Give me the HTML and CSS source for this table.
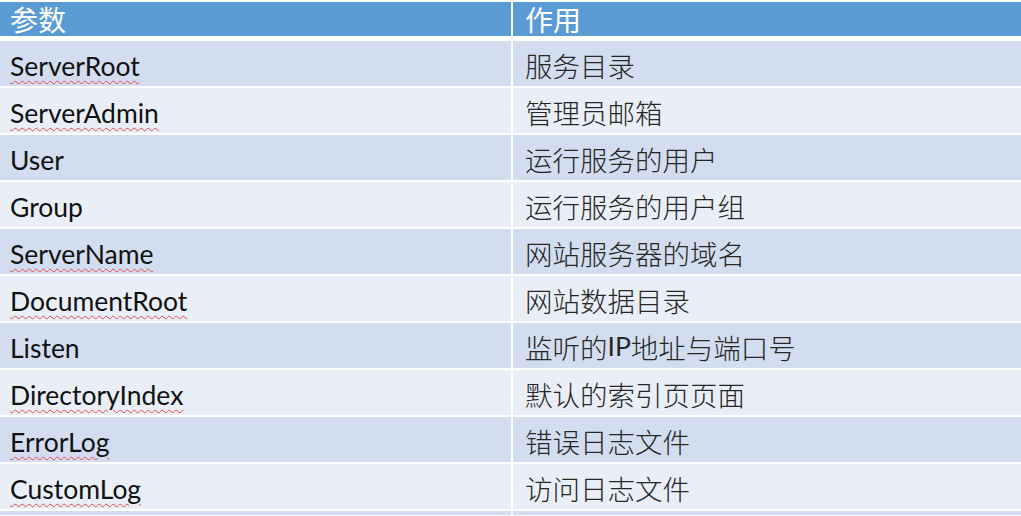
FILE: index.html
```html
<!DOCTYPE html>
<html lang="zh-CN">
<head>
<meta charset="utf-8">
<title>参数</title>
<link rel="stylesheet" href="styles.css">
</head>
<body>
<div class="table">
  <div class="cell head">参数</div>
  <div class="cell head right">作用</div>

  <div class="cell odd"><span class="typo">ServerRoot</span></div>
  <div class="cell odd right">服务目录</div>

  <div class="cell even"><span class="typo">ServerAdmin</span></div>
  <div class="cell even right">管理员邮箱</div>

  <div class="cell odd">User</div>
  <div class="cell odd right">运行服务的用户</div>

  <div class="cell even">Group</div>
  <div class="cell even right">运行服务的用户组</div>

  <div class="cell odd"><span class="typo">ServerName</span></div>
  <div class="cell odd right">网站服务器的域名</div>

  <div class="cell even"><span class="typo">DocumentRoot</span></div>
  <div class="cell even right">网站数据目录</div>

  <div class="cell odd">Listen</div>
  <div class="cell odd right">监听的<span class="latin">IP</span>地址与端口号</div>

  <div class="cell even"><span class="typo">DirectoryIndex</span></div>
  <div class="cell even right">默认的索引页页面</div>

  <div class="cell odd"><span class="typo">ErrorLog</span></div>
  <div class="cell odd right">错误日志文件</div>

  <div class="cell even"><span class="typo">CustomLog</span></div>
  <div class="cell even right">访问日志文件</div>

  <div class="cell odd filler"></div>
  <div class="cell odd right filler"></div>
</div>
</body>
</html>
```

FILE: styles.css
```css
html, body {
  margin: 0;
  padding: 0;
  background: #ffffff;
  overflow: hidden;
}

body {
  padding-top: 2px;
  font-family: "Lato", "Noto Sans CJK SC", sans-serif;
  font-size: 26.5px;
  color: #111111;
}

.table {
  display: grid;
  grid-template-columns: 511px 1fr;
  grid-template-rows: 37px repeat(10, 45px) 4px;
  column-gap: 2px;
  row-gap: 2px;
}

.cell {
  display: flex;
  align-items: center;
  padding-left: 10px;
  padding-top: 6px;
  line-height: 1.2;
  white-space: nowrap;
}

.cell.right {
  padding-left: 12px;
  padding-top: 3px;
  font-family: "Noto Sans CJK SC", sans-serif;
  font-weight: 300;
  font-size: 27.5px;
  color: #262626;
}

.latin {
  font-family: "Lato", sans-serif;
  font-weight: 400;
  font-size: 26.5px;
}

.head {
  background: #5b9bd5;
  color: #ffffff;
  margin-bottom: 3px;
  font-family: "Noto Sans CJK SC", sans-serif;
  font-size: 28px;
  line-height: 1;
  padding-top: 0;
  padding-bottom: 1px;
}

.cell.head.right {
  color: #ffffff;
  font-size: 28px;
  font-weight: 400;
  padding-top: 0;
}

.filler {
  padding: 0;
  overflow: hidden;
}

.odd {
  background: #d2deef;
}

.even {
  background: #eaeff7;
}

.typo {
  text-decoration: underline wavy #e8474a;
  text-decoration-thickness: 1px;
  text-underline-offset: 4px;
}
```
